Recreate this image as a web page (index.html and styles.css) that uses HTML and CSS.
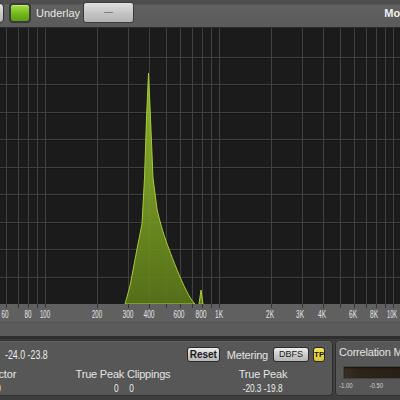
FILE: index.html
```html
<!DOCTYPE html>
<html lang="en">
<head>
    <meta charset="UTF-8">
    <meta name="viewport" content="width=device-width, initial-scale=1.0">
    <title>Spectrum Analyzer</title>
    <link rel="stylesheet" href="styles.css">
</head>
<body>
<div class="app">
    <header class="toolbar">
        <span class="btn btn-cut"></span>
        <span class="btn btn-green"></span>
        <span class="tb-label">Underlay</span>
        <span class="btn btn-select">—</span>
        <span class="tb-label tb-mode">Mode</span>
    </header>

    <div class="plot">
        <svg width="400" height="276" viewBox="0 0 400 276">
            <defs>
                <linearGradient id="fillGreen" x1="0" y1="0" x2="0" y2="1">
                    <stop offset="0" stop-color="#9cc630"/>
                    <stop offset="0.5" stop-color="#7fa324"/>
                    <stop offset="1" stop-color="#5c7a18"/>
                </linearGradient>
            </defs>
            <path class="grid" d="M0 29.5H400M0 56.5H400M0 84.5H400M0 111.5H400M0 139.5H400M0 166.5H400M0 194.5H400M0 221.5H400M0 249.5H400"/>
            <path class="grid grid-dark" d="M0 30.5H400M0 57.5H400M0 85.5H400M0 112.5H400M0 140.5H400M0 167.5H400M0 195.5H400M0 222.5H400M0 250.5H400"/>
            <path class="grid" d="M6.5 0V276M18.5 0V276M28.5 0V276M37.5 0V276M45.5 0V276M97.5 0V276M128.5 0V276M149.5 0V276M166.5 0V276M180.5 0V276M192.5 0V276M202.5 0V276M211.5 0V276M219.5 0V276M271.5 0V276M302.5 0V276M323.5 0V276M340.5 0V276M354.5 0V276M366.5 0V276M376.5 0V276M385.5 0V276M393.5 0V276"/>
            <path class="spectrum" d="M125 276 L130 258 L137 221 L142 196 L144.5 150 L146.5 90 L148.5 45 L150.5 90 L153 150 L157 181 C160 195 165 211 169 221 C173 232 180 250 186 262 C189 268 192 273 195 276 Z"/>
            <path class="spectrum" d="M199 276 L201 262 L203 276 Z"/>
        </svg>
    </div>

    <div class="axis">
        <svg width="400" height="18" viewBox="0 0 400 18">
            <path class="ticks" d="M6.5 0V4M18.5 0V4M28.5 0V4M37.5 0V4M45.5 0V4M97.5 0V4M128.5 0V4M149.5 0V4M166.5 0V4M180.5 0V4M192.5 0V4M202.5 0V4M211.5 0V4M219.5 0V4M271.5 0V4M302.5 0V4M323.5 0V4M340.5 0V4M354.5 0V4M366.5 0V4M376.5 0V4M385.5 0V4M393.5 0V4"/>
            <g class="freq">
                <text x="5" y="14" textLength="7" lengthAdjust="spacingAndGlyphs">60</text>
                <text x="28" y="14" textLength="7" lengthAdjust="spacingAndGlyphs">80</text>
                <text x="45" y="14" textLength="10" lengthAdjust="spacingAndGlyphs">100</text>
                <text x="97" y="14" textLength="10" lengthAdjust="spacingAndGlyphs">200</text>
                <text x="128" y="14" textLength="11" lengthAdjust="spacingAndGlyphs">300</text>
                <text x="149" y="14" textLength="11" lengthAdjust="spacingAndGlyphs">400</text>
                <text x="179" y="14" textLength="11" lengthAdjust="spacingAndGlyphs">600</text>
                <text x="201" y="14" textLength="11" lengthAdjust="spacingAndGlyphs">800</text>
                <text x="219" y="14" textLength="8" lengthAdjust="spacingAndGlyphs">1K</text>
                <text x="270" y="14" textLength="8" lengthAdjust="spacingAndGlyphs">2K</text>
                <text x="300" y="14" textLength="8" lengthAdjust="spacingAndGlyphs">3K</text>
                <text x="322" y="14" textLength="8" lengthAdjust="spacingAndGlyphs">4K</text>
                <text x="353" y="14" textLength="8" lengthAdjust="spacingAndGlyphs">6K</text>
                <text x="374" y="14" textLength="8" lengthAdjust="spacingAndGlyphs">8K</text>
                <text x="392" y="14" textLength="10" lengthAdjust="spacingAndGlyphs">10K</text>
            </g>
        </svg>
    </div>
    <div class="scroll"></div>

    <footer class="meters">
        <section class="panel panel-main">
            <div class="row-top">
                <span class="num num-big">-24.0 -23.8</span>
                <div class="controls">
                    <button class="btn-light btn-reset">Reset</button>
                    <span class="lbl">Metering</span>
                    <button class="btn-light btn-dbfs">DBFS</button>
                    <button class="btn-tp">TP</button>
                </div>
            </div>
            <div class="stats">
                <div class="stat stat-crest">
                    <span class="lbl">Crest Factor</span>
                    <span class="num">0</span>
                </div>
                <div class="stat">
                    <span class="lbl">True Peak Clippings</span>
                    <span class="num pair"><span>0</span><span>0</span></span>
                </div>
                <div class="stat">
                    <span class="lbl">True Peak</span>
                    <span class="num">-20.3 -19.8</span>
                </div>
            </div>
        </section>
        <section class="panel panel-corr">
            <div class="lbl corr-title">Correlation Meter</div>
            <div class="corr-bar"></div>
            <div class="corr-scale"><span>-1.00</span><span>-0.50</span></div>
        </section>
    </footer>
</div>
</body>
</html>
```

FILE: styles.css
```css
body {
    margin: 0;
    background: #3c3c3c;
    font-family: 'Liberation Sans', Arial, sans-serif;
    color: #e2e2e2;
}
.app {
    width: 400px;
    height: 400px;
    overflow: hidden;
    display: flex;
    flex-direction: column;
}

/* top toolbar */
.toolbar {
    height: 28px;
    flex-shrink: 0;
    display: flex;
    align-items: flex-start;
    padding-top: 3px;
    box-sizing: border-box;
    background: linear-gradient(#4e4e4e 0, #4e4e4e 4px, #616161 5px, #5a5a5a 28px);
    border-bottom: 1px solid #2c2c2c;
    overflow: hidden;
    white-space: nowrap;
}
.btn {
    display: block;
    box-sizing: border-box;
    height: 20px;
    border-radius: 4px;
    flex-shrink: 0;
}
.btn-cut {
    width: 14px;
    margin-left: -10px;
    background: linear-gradient(#e4e4e4, #b4b4b4);
    border: 1px solid #333;
}
.btn-green {
    width: 22px;
    margin-left: 5px;
    border: 2px solid #3a3a3a;
    background: linear-gradient(#a6e044, #72b81c 55%, #5e9c12);
    box-shadow: inset 0 1px 0 rgba(255, 255, 255, 0.35);
}
.tb-label {
    font-size: 11px;
    line-height: 19px;
    padding-top: 1px;
    margin-left: 5px;
    color: #e8e8e8;
}
.btn-select {
    width: 51px;
    height: 21px;
    margin-top: -1px;
    margin-left: 3px;
    border: 1px solid #3a3a3a;
    border-radius: 3px;
    background: linear-gradient(#e0e0e0, #c2c2c2 60%, #b4b4b4);
    color: #444;
    font-size: 9px;
    line-height: 19px;
    text-align: center;
}
.tb-mode {
    margin-left: auto;
    margin-right: -13px;
    font-weight: bold;
    color: #f0f0f0;
}

/* spectrum plot */
.plot {
    height: 276px;
    flex-shrink: 0;
    background: #1b1b1b;
}
.plot svg, .axis svg {
    display: block;
}
.grid {
    stroke: #404040;
    stroke-width: 1;
    fill: none;
}
.grid-dark {
    stroke: #141414;
}
.spectrum {
    fill: url(#fillGreen);
    fill-opacity: 0.88;
    stroke: #a6ca3a;
    stroke-width: 1;
    stroke-linejoin: round;
}

/* frequency axis */
.axis {
    height: 18px;
    flex-shrink: 0;
    background: #606060;
    border-bottom: 1px solid #555;
}
.ticks {
    stroke: #363636;
    stroke-width: 1;
}
.freq text {
    font-family: 'Liberation Sans', Arial, sans-serif;
    font-size: 10px;
    fill: #e4e4e4;
    text-anchor: middle;
}
.scroll {
    height: 13px;
    flex-shrink: 0;
    background: #5b5b5b;
    border-bottom: 3px solid #2e2e2e;
}

/* bottom meters */
.meters {
    flex: 1;
    display: flex;
    gap: 2px;
    padding: 1px 0 4px;
    box-sizing: border-box;
    background: #3e3e3e;
    overflow: hidden;
}
.panel {
    box-sizing: border-box;
    background: #575757;
    border: 1px solid #2f2f2f;
    border-radius: 4px;
    box-shadow: inset 0 1px 0 rgba(255, 255, 255, 0.08);
    flex-shrink: 0;
}
.panel-main {
    width: 343px;
    margin-left: -10px;
}
.lbl {
    font-size: 11px;
    letter-spacing: -0.2px;
    color: #e4e4e4;
    white-space: nowrap;
}
.num {
    display: inline-block;
    font-size: 11px;
    color: #ececec;
    white-space: nowrap;
    transform: scaleX(0.75);
}
.row-top {
    display: flex;
    align-items: center;
    padding: 6px 7px 0 14px;
    height: 21px;
    box-sizing: border-box;
}
.num-big {
    font-size: 13px;
    transform: scaleX(0.68);
    transform-origin: left center;
}
.controls {
    margin-left: auto;
    display: flex;
    align-items: center;
}
.btn-light, .btn-tp {
    box-sizing: border-box;
    height: 15px;
    padding: 0;
    border: 1px solid #2a2a2a;
    border-radius: 3px;
    font-family: 'Liberation Sans', Arial, sans-serif;
    color: #1c1c1c;
    line-height: 13px;
    text-align: center;
}
.btn-light {
    background: linear-gradient(#ededed, #c6c6c6 60%, #b6b6b6);
}
.btn-reset {
    width: 33px;
    font-size: 10px;
    font-weight: bold;
    margin-right: 7px;
}
.btn-dbfs {
    width: 36px;
    font-size: 9px;
    margin-left: 5px;
    margin-right: 4px;
}
.btn-tp {
    width: 12px;
    font-size: 8px;
    font-weight: bold;
    background: linear-gradient(#f4e65a, #d8c630);
}
.stats {
    display: grid;
    grid-template-columns: 66px 198px 82px;
    margin: 5px 0 0 -33px;
}
.stat {
    display: flex;
    flex-direction: column;
    align-items: center;
    line-height: 14px;
}
.stat-crest {
    align-items: stretch;
}
.stat-crest .num {
    text-align: right;
    padding-right: 20px;
}
.pair {
    display: flex;
    gap: 14px;
    padding-left: 2px;
}
.panel-corr {
    width: 90px;
    padding: 4px 0 0 3px;
}
.corr-title {
    line-height: 14px;
}
.corr-bar {
    margin: 7px 0 0 4px;
    height: 13px;
    box-sizing: border-box;
    border: 1px solid #444;
    border-right: none;
    background: linear-gradient(90deg, #3a3024, #2c2419 20%, #261f16);
    box-shadow: inset 0 1px 2px rgba(0, 0, 0, 0.6);
}
.corr-scale {
    display: flex;
    gap: 20px;
    margin-top: 3px;
    font-size: 7px;
    color: #d0d0d0;
    transform: scaleX(0.85);
    transform-origin: left center;
}
```
